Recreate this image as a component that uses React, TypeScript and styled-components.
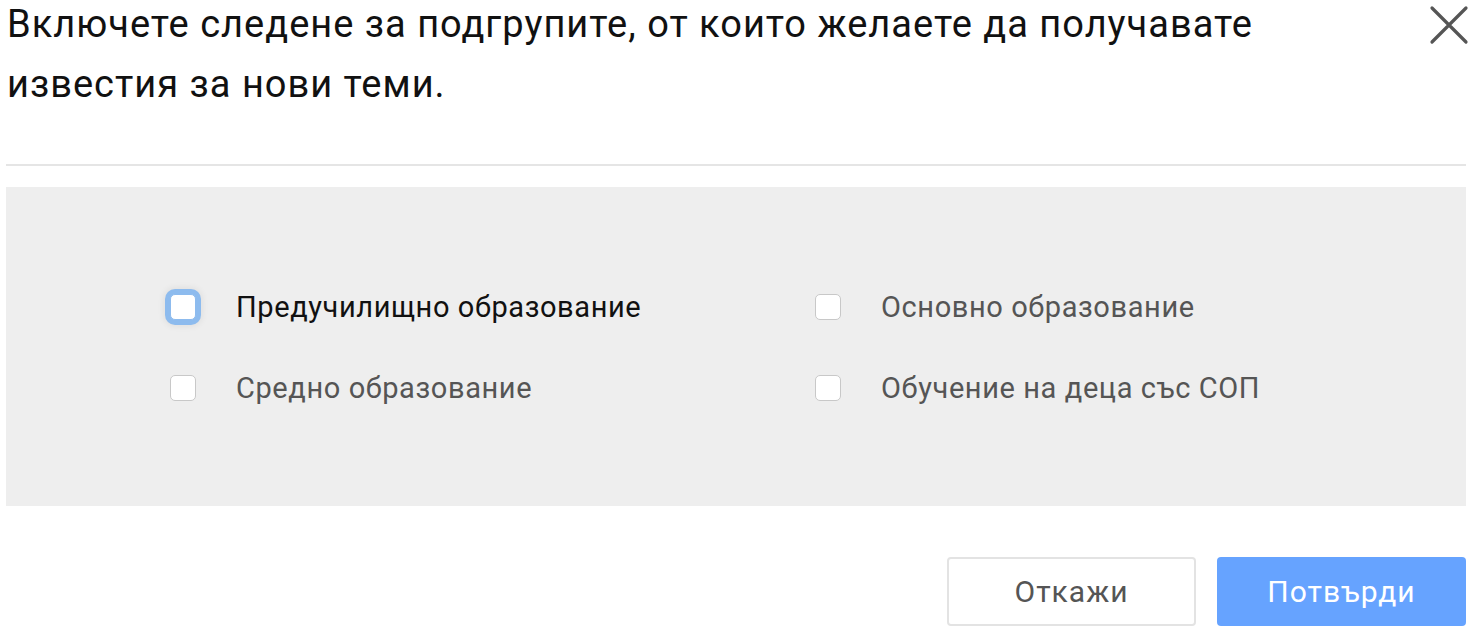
import styled, { createGlobalStyle } from "styled-components";

const GlobalStyle = createGlobalStyle`
  body {
    margin: 0;
    background: #fff;
    font-family: Roboto, "Noto Sans", "Liberation Sans", sans-serif;
  }
`;

const groups = [
  { label: "Предучилищно образование", focused: true },
  { label: "Основно образование" },
  { label: "Средно образование" },
  { label: "Обучение на деца със СОП" },
];

const App = () => {
  return (
    <>
      <GlobalStyle />
      <Dialog>
        <Header>
          <Title>
            Включете следене за подгрупите, от които желаете да получавате
            известия за нови теми.
          </Title>
          <CloseButton aria-label="Затвори">
            <svg width="40" height="40" viewBox="0 0 40 40">
              <path
                d="M3 3 L37 37 M37 3 L3 37"
                stroke="#555"
                strokeWidth="3.2"
                strokeLinecap="round"
              />
            </svg>
          </CloseButton>
        </Header>
        <Divider />
        <Panel>
          <Grid>
            {groups.map((g) => (
              <Option key={g.label}>
                <Box $focused={!!g.focused} />
                <Label $active={!!g.focused}>{g.label}</Label>
              </Option>
            ))}
          </Grid>
        </Panel>
        <Footer>
          <CancelButton>Откажи</CancelButton>
          <ConfirmButton>Потвърди</ConfirmButton>
        </Footer>
      </Dialog>
    </>
  );
};

export default App;

const Dialog = styled.div`
  padding: 0 14px 0 6px;
`;

const Header = styled.div`
  display: flex;
  justify-content: space-between;
  align-items: flex-start;
  height: 164px;
`;

const Title = styled.h2`
  margin: -6px 0 0;
  padding-left: 1px;
  max-width: 1300px;
  font-size: 38px;
  font-weight: 400;
  letter-spacing: 1px;
  line-height: 60px;
  color: #111;
`;

const CloseButton = styled.button`
  border: none;
  background: none;
  padding: 0;
  margin: 5px -3px 0 0;
  width: 40px;
  height: 40px;
  cursor: pointer;
`;

const Divider = styled.hr`
  margin: 0;
  border: none;
  height: 2px;
  background: #e5e5e5;
`;

const Panel = styled.div`
  margin-top: 21px;
  height: 319px;
  background: #eeeeee;
  display: flex;
  align-items: center;
`;

const Grid = styled.div`
  display: grid;
  grid-template-columns: 645px 600px;
  row-gap: 47px;
  padding-left: 164px;
  margin-top: 2px;
`;

const Option = styled.label`
  display: flex;
  align-items: center;
  height: 34px;
  cursor: pointer;
`;

const Box = styled.span<{ $focused: boolean }>`
  box-sizing: border-box;
  width: 26px;
  height: 26px;
  border-radius: 5px;
  background: #fff;
  border: 1px solid ${({ $focused }) => ($focused ? "#8dbbee" : "#c8c8c8")};
  box-shadow: ${({ $focused }) =>
    $focused ? "0 0 0 5px #8dbbee, 0 0 7px 6px rgba(0,0,0,0.07)" : "none"};
`;

const Label = styled.span<{ $active: boolean }>`
  margin-left: 40px;
  font-size: 29px;
  letter-spacing: 0.6px;
  color: ${({ $active }) => ($active ? "#111" : "#555")};
`;

const Footer = styled.div`
  display: flex;
  justify-content: flex-end;
  gap: 21px;
  margin-top: 51px;
`;

const ButtonBase = styled.button`
  box-sizing: border-box;
  width: 249px;
  height: 69px;
  border-radius: 4px;
  font-family: Roboto, "Noto Sans", sans-serif;
  font-size: 30px;
  letter-spacing: 1px;
  cursor: pointer;
`;

const CancelButton = styled(ButtonBase)`
  background: #fff;
  border: 2px solid #e3e3e3;
  color: #555;
`;

const ConfirmButton = styled(ButtonBase)`
  background: #66a3ff;
  border: none;
  color: #fff;
`;
